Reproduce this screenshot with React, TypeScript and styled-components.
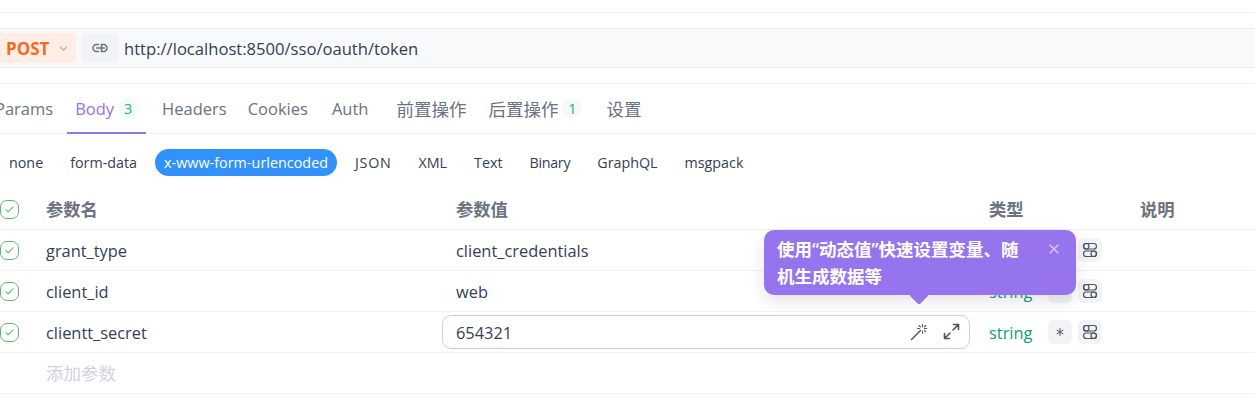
import { createGlobalStyle, styled } from "styled-components"
import { Check, ChevronDown, X, Asterisk } from "lucide-react"

const GlobalStyle = createGlobalStyle`
  html, body {
    margin: 0;
    background: #fff;
    overflow: hidden;
  }
  body {
    font-family: "Open Sans", "Noto Sans", "Noto Sans CJK SC", sans-serif;
    color: #354052;
  }
`

const Page = styled.div`
  position: relative;
  width: 1255px;
  height: 420px;
  overflow: hidden;
`
const TopGap = styled.div`
  height: 12px;
  border-bottom: 1px solid #f0f1f3;
  margin-bottom: 15px;
`
const UrlBar = styled.div`
  height: 38px;
  display: flex;
  align-items: center;
  background: #f8f9fb;
  border-top: 1px solid #eceef2;
  border-bottom: 1px solid #eceef2;
`
const Method = styled.div`
  width: 76px;
  height: 30px;
  padding-left: 6px;
  box-sizing: border-box;
  display: flex;
  align-items: center;
  gap: 8px;
  background: #ffeee5;
  border-radius: 0 5px 5px 0;
  color: #f26a26;
  font-size: 17px;
  font-weight: 700;
`
const LinkButton = styled.div`
  width: 38px;
  height: 30px;
  margin-left: 5px;
  display: flex;
  align-items: center;
  justify-content: center;
  background: #f2f3f7;
  border-radius: 5px;
  color: #6b7280;
`
const UrlText = styled.span`
  margin-left: 5px;
  font-size: 16.6px;
  color: #354052;
`
const Tabs = styled.div`
  margin-top: 15px;
  height: 49px;
  display: flex;
  border-top: 1px solid #f0f1f3;
  border-bottom: 1px solid #f0f1f3;
`
const Tab = styled.div<{ $active?: boolean; $cjk?: boolean; $left: number }>`
  margin-left: ${(p) => p.$left}px;
  margin-bottom: -1px;
  padding: 0 8px;
  display: flex;
  align-items: center;
  gap: 4px;
  font-size: ${(p) => (p.$cjk ? "17.5px" : "16.5px")};
  color: ${(p) => (p.$active ? "#9373ee" : "#6b7280")};
  border-bottom: 2px solid ${(p) => (p.$active ? "#9373ee" : "transparent")};
`
const Count = styled.span`
  width: 20px;
  height: 20px;
  border-radius: 50%;
  background: #f7f8fa;
  display: flex;
  align-items: center;
  justify-content: center;
  font-size: 14.5px;
  color: #10b58a;
`
const BodyTypes = styled.div`
  margin-top: 15px;
  height: 27px;
  display: flex;
  align-items: center;
  gap: 9px;
`
const BodyType = styled.div<{ $active?: boolean; $spacing: number }>`
  height: 27px;
  padding: 0 9px;
  display: flex;
  align-items: center;
  border-radius: 14px;
  font-size: 14.3px;
  letter-spacing: ${(p) => p.$spacing}px;
  background: ${(p) => (p.$active ? "#3291fb" : "transparent")};
  color: ${(p) => (p.$active ? "#fff" : "#354052")};
`
const Table = styled.div`
  margin-top: 13px;
`
const Row = styled.div`
  height: 40px;
  display: grid;
  grid-template-columns: 46px 410px 533px 151px 1fr;
  align-items: center;
  border-bottom: 1px solid #f0f1f3;
  font-size: 16.4px;
  color: #354052;
`
const HeadCell = styled.span`
  margin-top: -2px;
  font-size: 17.3px;
  font-weight: 600;
  color: #6b7280;
`
const CheckBox = styled.div`
  width: 19px;
  height: 19px;
  box-sizing: border-box;
  border: 1.3px solid #5cb96a;
  border-radius: 7px;
  display: flex;
  align-items: center;
  justify-content: center;
  color: #4caf5d;
`
const ValueInput = styled.div`
  margin-left: -14px;
  height: 34px;
  width: 528px;
  padding: 0 9px 0 13px;
  box-sizing: border-box;
  display: flex;
  align-items: center;
  justify-content: space-between;
  border: 1px solid #cbced9;
  border-radius: 9px;
`
const InputIcons = styled.div`
  display: flex;
  gap: 15px;
  color: #4b5563;
`
const TypeCell = styled.div`
  display: flex;
  align-items: center;
`
const TypeName = styled.span`
  color: #0f9d76;
  width: 59px;
`
const SquareButton = styled.div`
  width: 24px;
  height: 24px;
  margin-right: 6px;
  border-radius: 6px;
  background: #f2f3f5;
  display: flex;
  align-items: center;
  justify-content: center;
  color: #4b5563;
`
const AddParam = styled.span`
  margin-top: -2px;
  color: #cfd3da;
  font-size: 17.5px;
`
const Tip = styled.div`
  position: absolute;
  left: 764px;
  top: 230px;
  width: 312px;
  height: 65px;
  box-sizing: border-box;
  padding: 6px 50px 0 13px;
  background: #9674ee;
  border-radius: 10px;
  color: #fff;
  font-size: 17.5px;
  font-weight: 600;
  line-height: 27px;
  box-shadow: 0 6px 16px rgba(30, 30, 60, 0.12);
  &::after {
    content: "";
    position: absolute;
    left: 148px;
    bottom: -7px;
    width: 14px;
    height: 14px;
    background: #9674ee;
    transform: rotate(45deg);
    border-radius: 2px;
  }
`
const TipClose = styled.div`
  position: absolute;
  right: 14px;
  top: 11px;
  color: #d5c8f8;
  display: flex;
`

const tabs = [
  { label: "Params", left: -13 },
  { label: "Body", left: 6, active: true, count: "3" },
  { label: "Headers", left: 8 },
  { label: "Cookies", left: 5 },
  { label: "Auth", left: 8 },
  { label: "前置操作", left: 12, cjk: true },
  { label: "后置操作", left: 6, cjk: true, count: "1" },
  { label: "设置", left: 8, cjk: true },
]
const bodyTypes = [
  { label: "none", spacing: 0 },
  { label: "form-data", spacing: 0 },
  { label: "x-www-form-urlencoded", spacing: 0.05, active: true },
  { label: "JSON", spacing: 0.7 },
  { label: "XML", spacing: 0 },
  { label: "Text", spacing: 0 },
  { label: "Binary", spacing: -0.3 },
  { label: "GraphQL", spacing: 0 },
  { label: "msgpack", spacing: 0 },
]

function ChainIcon() {
  return (
    <svg width="16" height="16" viewBox="0 0 16 16" fill="none" stroke="currentColor" strokeWidth="1.5" strokeLinecap="round">
      <path d="M6.5 4.5H4.5a3.5 3.5 0 0 0 0 7h2" />
      <path d="M9.5 4.5h2a3.5 3.5 0 0 1 0 7h-2z" />
      <path d="M4.5 8h8" />
    </svg>
  )
}

// the two little pills stacked on top of each other
function ToggleIcon() {
  return (
    <svg width="16" height="16" viewBox="0 0 16 16" fill="none" stroke="currentColor" strokeWidth="1.2">
      <rect x="1.5" y="1.5" width="13" height="5.5" rx="2.75" />
      <circle cx="4.25" cy="4.25" r="2.75" />
      <rect x="1.5" y="9" width="13" height="5.5" rx="2.75" />
      <circle cx="11.75" cy="11.75" r="2.75" />
    </svg>
  )
}

function WandIcon() {
  return (
    <svg width="18" height="18" viewBox="0 0 18 18" fill="none" stroke="currentColor" strokeWidth="1.1" strokeLinecap="round">
      <path d="M1.5 16.5l9-9" strokeWidth="1.5" />
      <path d="M12.5 1.5v2.2M12.5 8v2.2M7.5 5.5h2.2M14.5 5.5h2.2M9 2.5l1.4 1.4M15.8 2.5l-1.4 1.4M14.4 7.4l1.4 1.4" />
    </svg>
  )
}

function ExpandIcon() {
  return (
    <svg width="17" height="17" viewBox="0 0 17 17" fill="none" stroke="currentColor" strokeWidth="1.6" strokeLinecap="round" strokeLinejoin="round">
      <path d="M10.5 1.5h5v5M15.5 1.5l-5.5 5.5" />
      <path d="M6.5 15.5h-5v-5M1.5 15.5L7 10" />
    </svg>
  )
}

function CheckCell() {
  return (
    <CheckBox>
      <Check size={11} strokeWidth={2.2} />
    </CheckBox>
  )
}

function TypeColumn() {
  return (
    <TypeCell>
      <TypeName>string</TypeName>
      <SquareButton>
        <Asterisk size={14} strokeWidth={1.7} />
      </SquareButton>
      <SquareButton>
        <ToggleIcon />
      </SquareButton>
    </TypeCell>
  )
}

export default function App() {
  return (
    <Page>
      <GlobalStyle />
      <TopGap />
      <UrlBar>
        <Method>
          POST
          <ChevronDown size={13} color="#f0905f" />
        </Method>
        <LinkButton>
          <ChainIcon />
        </LinkButton>
        <UrlText>http://localhost:8500/sso/oauth/token</UrlText>
      </UrlBar>
      <Tabs>
        {tabs.map((t) => (
          <Tab key={t.label} $active={t.active} $cjk={t.cjk} $left={t.left}>
            {t.label}
            {t.count && <Count>{t.count}</Count>}
          </Tab>
        ))}
      </Tabs>
      <BodyTypes>
        {bodyTypes.map((b) => (
          <BodyType key={b.label} $active={b.active} $spacing={b.spacing}>
            {b.label}
          </BodyType>
        ))}
      </BodyTypes>
      <Table>
        <Row>
          <CheckCell />
          <HeadCell>参数名</HeadCell>
          <HeadCell>参数值</HeadCell>
          <HeadCell>类型</HeadCell>
          <HeadCell>说明</HeadCell>
        </Row>
        <Row>
          <CheckCell />
          <span>grant_type</span>
          <span>client_credentials</span>
          <TypeColumn />
          <span />
        </Row>
        <Row>
          <CheckCell />
          <span>client_id</span>
          <span>web</span>
          <TypeColumn />
          <span />
        </Row>
        <Row>
          <CheckCell />
          <span>clientt_secret</span>
          <ValueInput>
            654321
            <InputIcons>
              <WandIcon />
              <ExpandIcon />
            </InputIcons>
          </ValueInput>
          <TypeColumn />
          <span />
        </Row>
        <Row>
          <span />
          <AddParam>添加参数</AddParam>
          <span />
          <span />
          <span />
        </Row>
      </Table>
      <Tip>
        使用“动态值”快速设置变量、随机生成数据等
        <TipClose>
          <X size={16} />
        </TipClose>
      </Tip>
    </Page>
  )
}
